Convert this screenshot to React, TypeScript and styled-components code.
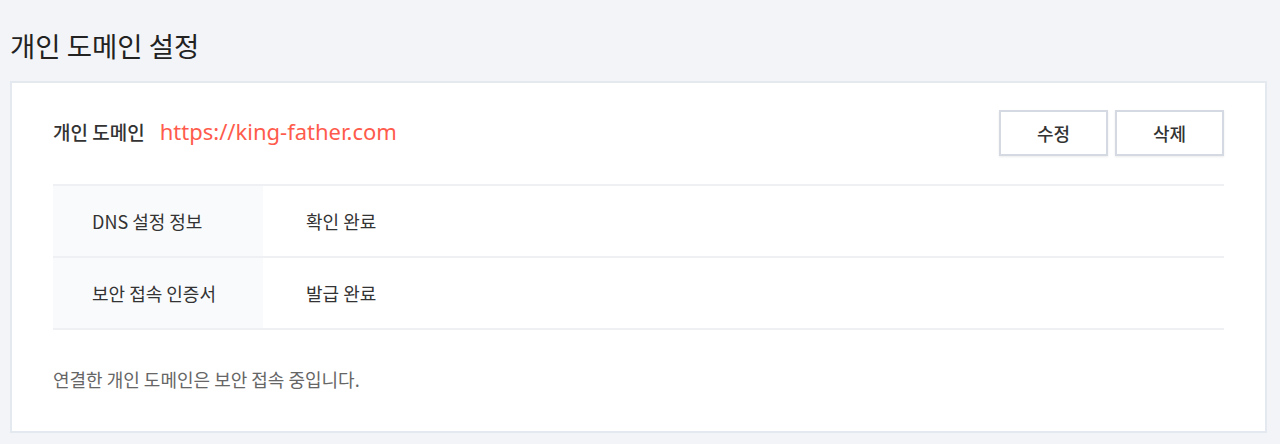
import React from "react";
import styled, { createGlobalStyle } from "styled-components";

const GlobalStyle = createGlobalStyle`
  body {
    margin: 0;
    background: #f3f4f7;
    font-family: "Noto Sans CJK KR", "Noto Sans", sans-serif;
    color: #222;
  }
`;

interface InfoRow {
  label: string;
  value: string;
}

const rows: InfoRow[] = [
  { label: "DNS 설정 정보", value: "확인 완료" },
  { label: "보안 접속 인증서", value: "발급 완료" },
];

export default function App() {
  return (
    <Page>
      <GlobalStyle />
      <PageTitle>개인 도메인 설정</PageTitle>
      <Card>
        <Header>
          <DomainInfo>
            <DomainLabel>개인 도메인</DomainLabel>
            <DomainUrl>https://king-father.com</DomainUrl>
          </DomainInfo>
          <Actions>
            <Button>수정</Button>
            <Button>삭제</Button>
          </Actions>
        </Header>
        <Table>
          {rows.map((r) => (
            <Row key={r.label}>
              <LabelCell>{r.label}</LabelCell>
              <ValueCell>{r.value}</ValueCell>
            </Row>
          ))}
        </Table>
        <Notice>연결한 개인 도메인은 보안 접속 중입니다.</Notice>
      </Card>
    </Page>
  );
}

const Page = styled.div`
  padding: 28px 13px 11px 10px;
`;

const PageTitle = styled.h1`
  margin: 0 0 19px;
  font-size: 27.5px;
  font-weight: 400;
  line-height: 34px;
  color: #222;
`;

const Card = styled.div`
  background: #fff;
  border: 2px solid #e4e8ef;
  padding: 27px 41px 40px 41px;
`;

const Header = styled.div`
  display: flex;
  align-items: center;
  justify-content: space-between;
  height: 46px;
  margin-bottom: 28px;
`;

const DomainInfo = styled.div`
  display: flex;
  align-items: center;
  gap: 15px;
  margin-top: -4px;
`;

const DomainLabel = styled.span`
  font-size: 19px;
  font-weight: 500;
  color: #333;
`;

const DomainUrl = styled.span`
  font-family: "Noto Sans", sans-serif;
  font-size: 22px;
  color: #ff5b4c;
`;

const Actions = styled.div`
  display: flex;
  gap: 7px;
`;

const Button = styled.button`
  width: 109px;
  height: 46px;
  background: #fff;
  border: 2px solid #d5dae2;
  box-shadow: 0 1px 2px rgba(0, 0, 0, 0.08);
  font-family: "Noto Sans CJK KR", sans-serif;
  font-size: 18px;
  font-weight: 500;
  color: #333;
  cursor: pointer;
`;

const Table = styled.div`
  border-bottom: 2px solid #eef0f3;
`;

const Row = styled.div`
  display: grid;
  grid-template-columns: 210px 1fr;
  height: 70px;
  border-top: 2px solid #eef0f3;
`;

const LabelCell = styled.div`
  display: flex;
  align-items: center;
  padding-left: 39px;
  background: #f9fafc;
  font-size: 18px;
  color: #333;
`;

const ValueCell = styled.div`
  display: flex;
  align-items: center;
  padding-left: 43px;
  font-size: 18px;
  color: #333;
`;

const Notice = styled.p`
  margin: 37px 0 0;
  font-size: 18px;
  line-height: 24px;
  color: #666;
`;
